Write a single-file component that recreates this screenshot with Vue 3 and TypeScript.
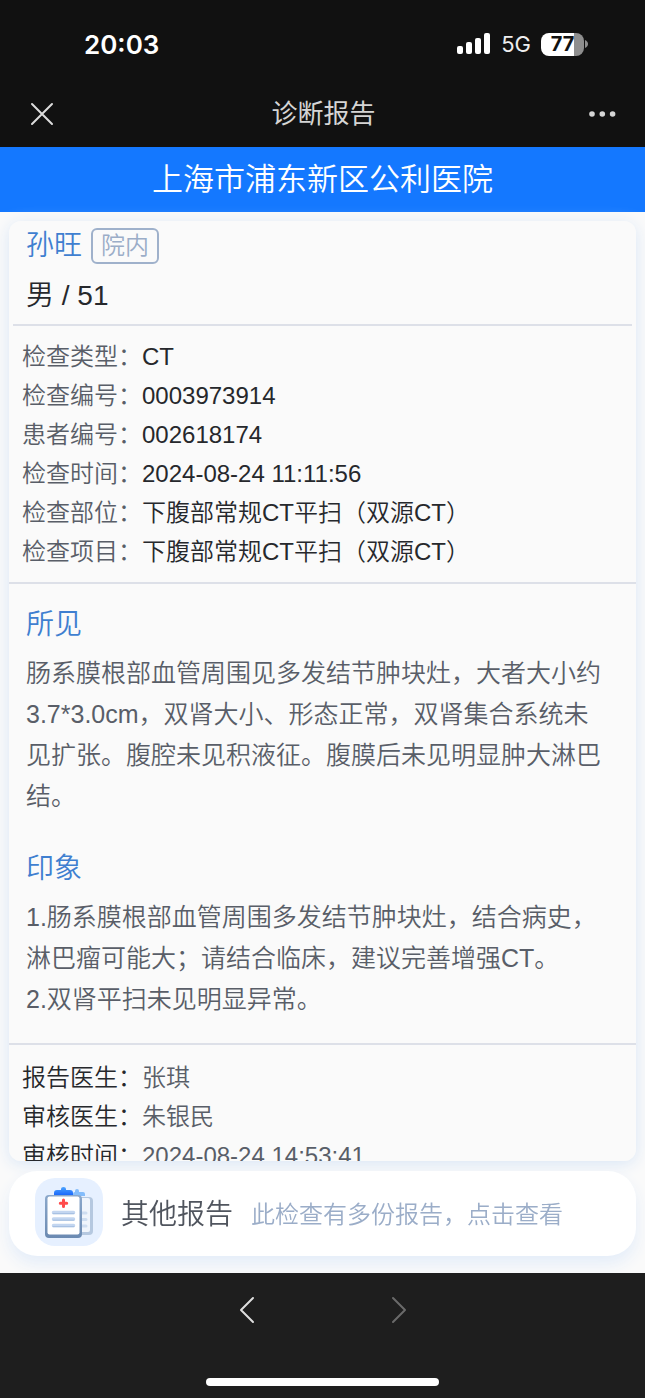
<script setup lang="ts">
interface Field {
  label: string
  value: string
}

interface Section {
  title: string
  lines: string[]
}

const examFields: Field[] = [
  { label: '检查类型：', value: 'CT' },
  { label: '检查编号：', value: '0003973914' },
  { label: '患者编号：', value: '002618174' },
  { label: '检查时间：', value: '2024-08-24 11:11:56' },
  { label: '检查部位：', value: '下腹部常规CT平扫（双源CT）' },
  { label: '检查项目：', value: '下腹部常规CT平扫（双源CT）' },
]

const sections: Section[] = [
  {
    title: '所见',
    lines: [
      '肠系膜根部血管周围见多发结节肿块灶，大者大小约3.7*3.0cm，双肾大小、形态正常，双肾集合系统未见扩张。腹腔未见积液征。腹膜后未见明显肿大淋巴结。',
    ],
  },
  {
    title: '印象',
    lines: [
      '1.肠系膜根部血管周围多发结节肿块灶，结合病史，淋巴瘤可能大；请结合临床，建议完善增强CT。',
      '2.双肾平扫未见明显异常。',
    ],
  },
]

const signFields: Field[] = [
  { label: '报告医生：', value: '张琪' },
  { label: '审核医生：', value: '朱银民' },
  { label: '审核时间：', value: '2024-08-24 14:53:41' },
]
</script>

<template>
  <div class="screen" lang="zh-CN">
    <header class="top">
      <div class="status">
        <span class="clock">20:03</span>
        <div class="indicators">
          <svg class="signal" viewBox="0 0 34 22" aria-hidden="true">
            <rect x="0" y="13" width="6" height="8" rx="2" />
            <rect x="9" y="9" width="6" height="12" rx="2" />
            <rect x="18" y="5" width="6" height="16" rx="2" />
            <rect x="27" y="0" width="6" height="21" rx="2" />
          </svg>
          <span class="network">5G</span>
          <div class="battery">
            <span class="level">77</span>
            <svg class="cap" viewBox="0 0 4 8" aria-hidden="true"><path d="M0 0C2 1 3 2.300 3 4S2 7 0 8Z" /></svg>
          </div>
        </div>
      </div>
      <nav class="nav">
        <button class="icon-button" type="button" aria-label="关闭">
          <svg width="24" height="24" viewBox="0 0 24 24" aria-hidden="true">
            <path d="M2 2L22 22M22 2L2 22" fill="none" stroke="#dcdcdc" stroke-width="2" stroke-linecap="round" />
          </svg>
        </button>
        <h1 class="nav-title">诊断报告</h1>
        <button class="icon-button end" type="button" aria-label="更多">
          <svg width="28" height="8" viewBox="0 0 28 8" aria-hidden="true" fill="#d5d5d5">
            <circle cx="3" cy="4" r="2.800" />
            <circle cx="13.300" cy="4" r="2.800" />
            <circle cx="23.600" cy="4" r="2.800" />
          </svg>
        </button>
      </nav>
    </header>

    <div class="hospital">上海市浦东新区公利医院</div>

    <main class="content">
      <article class="report">
        <section class="patient">
          <div class="name-row">
            <span class="name">孙旺</span>
            <span class="tag">院内</span>
          </div>
          <div class="bio">男 / 51</div>
        </section>

        <dl class="fields exam">
          <div v-for="field in examFields" :key="field.label" class="field">
            <dt>{{ field.label }}</dt>
            <dd>{{ field.value }}</dd>
          </div>
        </dl>

        <div class="findings">
          <section v-for="section in sections" :key="section.title">
            <h2>{{ section.title }}</h2>
            <p v-for="line in section.lines" :key="line">{{ line }}</p>
          </section>
        </div>

        <dl class="fields sign">
          <div v-for="field in signFields" :key="field.label" class="field">
            <dt>{{ field.label }}</dt>
            <dd>{{ field.value }}</dd>
          </div>
        </dl>
      </article>

      <button class="others" type="button">
        <span class="others-icon">
          <svg width="68" height="68" viewBox="0 0 68 68" aria-hidden="true">
            <defs>
              <linearGradient id="board" x1="0" y1="0" x2="0" y2="1">
                <stop offset="0" stop-color="#8ba8cb" />
                <stop offset="1" stop-color="#6b8ab2" />
              </linearGradient>
              <linearGradient id="clip" x1="0" y1="0" x2="0" y2="1">
                <stop offset="0" stop-color="#4ba4ff" />
                <stop offset="1" stop-color="#1c68fa" />
              </linearGradient>
            </defs>
            <rect x="28" y="19" width="30" height="38" rx="4" fill="#b5c8e0" />
            <rect x="28" y="20" width="27" height="34" rx="2" fill="#f0f5fc" />
            <path d="M46 35h5M46 41.500h5M46 48h5" stroke="#cfdef1" stroke-width="3" stroke-linecap="round" />
            <path d="M38 18v-2q0-2 2-2v-1q0-2 2-2t2 2v1h4q2 0 2 2v2z" fill="#83bcfb" />
            <rect x="10" y="17" width="37" height="43" rx="4" fill="url(#board)" />
            <rect x="12.500" y="18.500" width="32" height="38" rx="2" fill="#fff" />
            <path d="M19 17v-2q0-3 3-3h4v-1q0-2 2.500-2t2.500 2v1h4q3 0 3 3v2z" fill="url(#clip)" />
            <path d="M28.500 22v6.400M25.300 25.200h6.400" stroke="#ff4b4b" stroke-width="3" stroke-linecap="round" />
            <path d="M18.500 34.500h20M18.500 41h20M18.500 47.500h20" stroke="#c3d6f0" stroke-width="3.500" stroke-linecap="round" />
            <path d="M18 35.700h21M18 42.200h21M18 48.700h21" stroke="#a2bde0" stroke-width="1" stroke-linecap="round" />
          </svg>
        </span>
        <span class="others-title">其他报告</span>
        <span class="others-hint">此检查有多份报告，点击查看</span>
      </button>
    </main>

    <footer class="bottom">
      <div class="history">
        <button class="history-button" type="button" aria-label="后退">
          <svg width="16" height="28" viewBox="0 0 16 28" aria-hidden="true">
            <path d="M14 2L2 14L14 26" fill="none" stroke="#dedede" stroke-width="2" stroke-linecap="round" stroke-linejoin="round" />
          </svg>
        </button>
        <button class="history-button" type="button" aria-label="前进" disabled>
          <svg width="16" height="28" viewBox="0 0 16 28" aria-hidden="true">
            <path d="M2 2L14 14L2 26" fill="none" stroke="#6a6a6a" stroke-width="2" stroke-linecap="round" stroke-linejoin="round" />
          </svg>
        </button>
      </div>
      <div class="home-bar"></div>
    </footer>
  </div>
</template>

<style>
body {
  margin: 0;
  background: #1e1e1e;
}
</style>

<style scoped>
.screen {
  display: flex;
  flex-direction: column;
  height: 100vh;
  box-sizing: border-box;
  font-family: "Liberation Sans", "Noto Sans CJK SC", sans-serif;
  font-weight: 350;
  color: #26282c;
  background: #fafafa;
}

h1,
h2,
p,
dl,
dd {
  margin: 0;
  font-weight: inherit;
}

button {
  margin: 0;
  padding: 0;
  border: 0;
  background: none;
  font: inherit;
  color: inherit;
  text-align: left;
}

svg {
  display: block;
}

.top {
  flex: none;
  background: #111;
}

.status {
  display: flex;
  align-items: center;
  justify-content: space-between;
  height: 88px;
  padding: 0 56px 0 84px;
  box-sizing: border-box;
  font-family: Inter, "Liberation Sans", sans-serif;
  color: #fff;
}

.clock {
  font-size: 26px;
  font-weight: 600;
}

.indicators {
  display: flex;
  align-items: center;
}

.signal {
  width: 34px;
  height: 22px;
  fill: #fff;
}

.network {
  margin-left: 10px;
  font-size: 22px;
  font-weight: 400;
  color: #eee;
}

.battery {
  display: flex;
  align-items: center;
  gap: 1px;
  margin-left: 10px;
}

.level {
  width: 43px;
  height: 23px;
  border-radius: 8px;
  background: linear-gradient(to right, #fff 77%, #8e8e8e 77%);
  color: #111;
  font-size: 20px;
  font-weight: 700;
  line-height: 23px;
  text-align: center;
}

.cap {
  width: 4px;
  height: 8px;
  fill: #8e8e8e;
}

.nav {
  display: grid;
  grid-template-columns: 1fr auto 1fr;
  align-items: center;
  height: 59px;
  padding: 0 28px 8px 30px;
  box-sizing: border-box;
}

.icon-button {
  display: flex;
}

.icon-button.end {
  justify-self: end;
}

.nav-title {
  font-size: 26px;
  line-height: 40px;
  color: #d5d5d5;
  font-weight: 400;
}

.hospital {
  flex: none;
  background: #1478ff;
  color: #fff;
  font-size: 31px;
  line-height: 65px;
  text-align: center;
}

.content {
  flex: 1;
  min-height: 0;
  display: flex;
  flex-direction: column;
  gap: 10px;
  padding: 9px 9px 17px;
}

.report {
  flex: 1;
  min-height: 0;
  overflow-y: auto;
  scrollbar-width: none;
  border-radius: 12px;
  background: #fafafa;
  box-shadow: 0 3px 16px #d9e6f6;
}

.patient {
  margin: 0 4px;
  padding: 7px 13px 8px;
  border-bottom: 2px solid #dde0e8;
}

.name-row {
  display: flex;
  align-items: center;
  gap: 9px;
}

.name {
  font-size: 28px;
  line-height: 36px;
  color: #3f7fd0;
}

.tag {
  padding: 0 8px;
  border: 2px solid #9fb1cb;
  border-radius: 6px;
  font-size: 24px;
  line-height: 32px;
  color: #9badc8;
}

.bio {
  margin-top: 12px;
  font-size: 28px;
  line-height: 40px;
}

.fields {
  padding: 11px 13px;
  font-size: 24px;
  line-height: 39px;
}

.field {
  display: flex;
}

dt {
  flex: none;
}

.exam dt,
.sign dd {
  color: #595e68;
}

.findings {
  display: flex;
  flex-direction: column;
  gap: 32px;
  padding: 21px 30px 23px 17px;
  border-top: 2px solid #dde0e8;
  border-bottom: 2px solid #dde0e8;
}

h2 {
  margin-bottom: 8px;
  font-size: 28px;
  line-height: 40px;
  color: #3f7fd0;
}

p {
  font-size: 25px;
  line-height: 41px;
  color: #595e68;
}

.sign {
  padding-top: 13px;
}

.others {
  flex: none;
  display: flex;
  align-items: center;
  height: 85px;
  padding: 0 26px 3px;
  border-radius: 28px;
  background: #fff;
  box-shadow: 0 8px 16px #e4edf9;
}

.others-icon {
  border-radius: 20px;
  background: #e6f0ff;
}

.others-title {
  margin-left: 18px;
  font-size: 28px;
  color: #50555e;
}

.others-hint {
  margin-left: 18px;
  font-size: 24px;
  color: #9badc8;
}

.bottom {
  flex: none;
  display: flex;
  flex-direction: column;
  align-items: center;
  justify-content: space-between;
  height: 125px;
  padding: 23px 0 12px;
  box-sizing: border-box;
  background: #1e1e1e;
}

.history {
  display: flex;
  gap: 136px;
}

.home-bar {
  width: 36%;
  height: 8px;
  border-radius: 4px;
  background: #fff;
}
</style>
